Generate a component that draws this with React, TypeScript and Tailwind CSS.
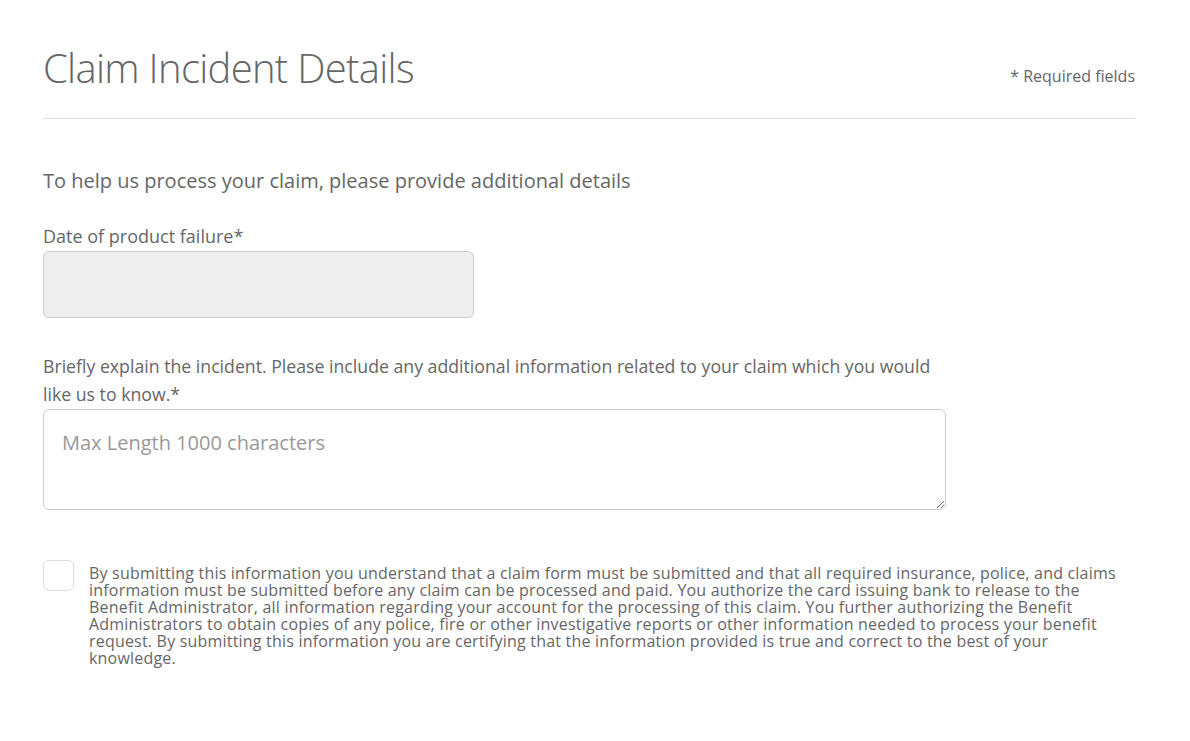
const disclaimer = [
  'By submitting this information you understand that a claim form must be submitted and that all required insurance, police, and claims',
  'information must be submitted before any claim can be processed and paid. You authorize the card issuing bank to release to the',
  'Benefit Administrator, all information regarding your account for the processing of this claim. You further authorizing the Benefit',
  'Administrators to obtain copies of any police, fire or other investigative reports or other information needed to process your benefit',
  'request. By submitting this information you are certifying that the information provided is true and correct to the best of your',
  'knowledge.',
];

const App = () => {
  return (
    <div className="min-h-[741px] bg-white text-[#666] font-['Open_Sans',sans-serif]">
      <div className="ml-[43px] w-[1092px] pt-[44px]">
        <div className="flex items-end justify-between pb-[26px] border-b border-[#dddddd]">
          <h1 className="text-[40px] leading-[48px] font-light text-[#666] tracking-[-0.7px]">Claim Incident Details</h1>
          <span className="text-[16px] leading-[20px] mb-[6px] text-[#666]">* Required fields</span>
        </div>

        <p className="mt-[49px] text-[20px] leading-[26px]">
          To help us process your claim, please provide additional details
        </p>

        <div className="mt-[30px]">
          <label className="block text-[18px] leading-[24px] mb-[3px]">Date of product failure*</label>
          <div className="w-[431px] h-[67px] rounded-[6px] border border-[#cccccc] bg-[#eeeeee]" />
        </div>

        <div className="mt-[34px]">
          <label className="block text-[17.7px] leading-[28px] mb-[1px]">
            Briefly explain the incident. Please include any additional information related to your claim which you would
            <br />
            like us to know.*
          </label>
          <textarea
            placeholder="Max Length 1000 characters"
            className="block w-[903px] h-[101px] rounded-[6px] border border-[#cccccc] bg-white px-[18px] pt-[20px] text-[20px] leading-[26px] text-[#666] placeholder:text-[#999] outline-none"
          />
        </div>

        <div className="mt-[50px] flex items-start gap-[15px]">
          <div className="w-[31px] h-[31px] shrink-0 rounded-[6px] border border-[#dddddd] bg-white" />
          <p className="text-[16px] leading-[17px] tracking-[0.2px] mt-[5px] text-[#666]">
            {disclaimer.map((line, i) => (
              <span key={i} className="block whitespace-nowrap">{line}</span>
            ))}
          </p>
        </div>
      </div>
    </div>
  );
};

export default App;
